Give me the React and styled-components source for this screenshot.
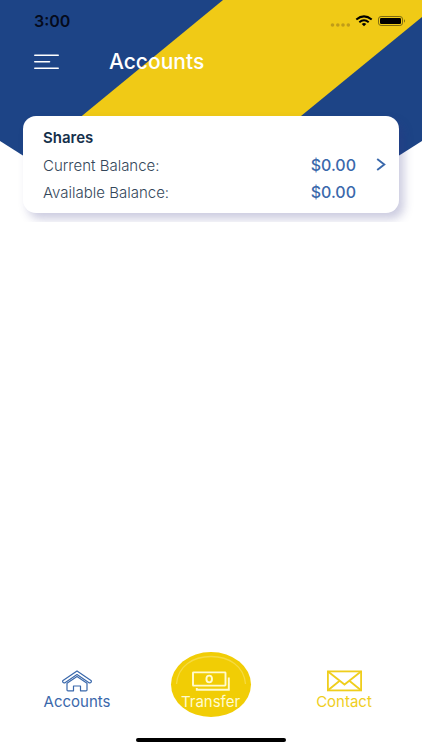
import React from 'react';
import styled, { createGlobalStyle } from 'styled-components';

const navy = '#1d4486';
const blue = '#3a68ab';
const yellow = '#f0ca16';
const tabYellow = '#f1cd05';
const contactYellow = '#efce1c';
const cream = '#fffbd0';
const ink = '#15304b';
const slate = '#34475a';
const white = '#ffffff';

const GlobalStyle = createGlobalStyle`
  * {
    box-sizing: border-box;
  }
  body {
    margin: 0;
    background: ${white};
    font-family: Inter, Roboto, sans-serif;
  }
`;

const Screen = styled.div`
  position: relative;
  display: flex;
  flex-direction: column;
  min-height: 100vh;
`;

const Backdrop = styled.svg`
  position: absolute;
  top: 0;
  left: 0;
  width: 100%;
  height: 210px;
  z-index: -1;
`;

const StatusBar = styled.div`
  display: flex;
  align-items: center;
  justify-content: space-between;
  height: 42px;
  padding: 0 16px 0 34px;
`;

const Time = styled.time`
  font-size: 16px;
  font-weight: 600;
  color: #050b1c;
`;

const Header = styled.header`
  display: flex;
  align-items: center;
  gap: 50px;
  height: 39px;
  padding: 0 34px;
`;

const MenuButton = styled.button`
  display: flex;
  padding: 0;
  border: 0;
  background: none;
  cursor: pointer;
`;

const Title = styled.h1`
  margin: 0;
  font-size: 21px;
  font-weight: 500;
  color: ${white};
`;

// clips the card shadow just below the card
const AccountList = styled.main`
  padding: 35px 23px 9px;
  overflow: hidden;
`;

const Card = styled.a`
  display: flex;
  align-items: center;
  gap: 20px;
  height: 97px;
  padding: 0 13px 0 20px;
  border-radius: 13px;
  background: ${white};
  box-shadow: 5px 6px 10px rgba(50, 50, 130, 0.25);
  text-decoration: none;
`;

const CardBody = styled.div`
  flex: 1;
`;

const CardTitle = styled.h2`
  margin: 0;
  font-size: 15px;
  font-weight: 600;
  line-height: 28px;
  color: ${ink};
`;

const BalanceRow = styled.div`
  display: flex;
  justify-content: space-between;
  line-height: 27px;
`;

const BalanceLabel = styled.span`
  font-size: 15px;
  font-weight: 300;
  color: ${slate};
`;

const Amount = styled.span`
  font-size: 16px;
  font-weight: 500;
  color: ${blue};
`;

const TabBar = styled.nav`
  display: flex;
  align-items: center;
  justify-content: space-between;
  margin-top: auto;
  padding: 0 38px 0 37px;
`;

const Tab = styled.a`
  display: flex;
  flex-direction: column;
  align-items: center;
  justify-content: flex-end;
  width: 80px;
  height: 65px;
  padding-bottom: 6px;
  font-size: 15px;
  line-height: 18px;
  color: ${(props) => props.$color};
  text-decoration: none;

  svg {
    margin-bottom: 1px;
  }
`;

const TransferTab = styled(Tab)`
  position: relative;
  border-radius: 50%;
  background: ${tabYellow};
`;

const Arc = styled.svg`
  position: absolute;
  top: 0;
  left: 0;
`;

const HomeIndicator = styled.div`
  width: 150px;
  height: 4px;
  margin: 21px auto 8px;
  border-radius: 2px;
  background: #000000;
`;

const StatusIcons = () => (
  <svg width="76" height="14" viewBox="0 0 76 14" aria-hidden="true">
    <g fill="#c09c18">
      <circle cx="2.5" cy="11" r="1.8" />
      <circle cx="7.8" cy="11" r="1.8" />
      <circle cx="13" cy="11" r="1.8" />
      <circle cx="18.3" cy="11" r="1.8" />
    </g>
    <g fill="none" stroke="#000000" strokeWidth="2">
      <path d="M26.3 5.6 Q34 -0.8 41.7 5.6" />
      <path d="M29.3 8.3 Q34 4.3 38.7 8.3" />
    </g>
    <path d="M31.7 9.9 Q34 8.2 36.3 9.9 L34 12.2 Z" />
    <rect x="48.5" y="2.5" width="24" height="9" rx="2.6" fill="none" stroke="#7a6812" />
    <rect x="50" y="4" width="21" height="6" rx="1.2" />
    <path d="M74 5.3 Q76 7 74 8.7 Z" fill="#7a6812" />
  </svg>
);

const MenuIcon = () => (
  <svg width="25" height="16" viewBox="0 0 25 16" fill="none" stroke={white} strokeWidth="1.6" strokeLinecap="round">
    <path d="M0.8 1.3 H24.2 M0.8 7.8 H15.5 M0.8 14.2 H24.2" />
  </svg>
);

const ChevronIcon = () => (
  <svg width="10" height="14" viewBox="0 0 10 14" fill="none" stroke={blue} strokeWidth="1.9">
    <path d="M1.2 1 L8.3 6.5 L1.2 12" />
  </svg>
);

const HomeIcon = () => (
  <svg width="30" height="22" viewBox="0 0 30 22" fill="none" stroke={blue} strokeWidth="1.2" strokeLinejoin="round">
    <path d="M15 0.9 L29 10.4 Q30 12 28.3 12.8 H27 L15 4.6 L3 12.8 H1.7 Q0 12 1 10.4 Z" />
    <path d="M5 13.2 V20 Q5 20.8 6 20.8 H11.5 V16 H18.5 V20.8 H24 Q25 20.8 25 20 V13.2 L15 6.6 Z" />
  </svg>
);

const CashIcon = () => (
  <svg width="38" height="21" viewBox="0 0 38 21" fill="none" stroke={cream} strokeWidth="1.9">
    <rect x="1" y="1.4" width="32.5" height="13.2" rx="0.5" />
    <ellipse cx="17.2" cy="8" rx="2.8" ry="3.4" />
    <path d="M36.8 6.5 V18.8 H4.8 V17" />
  </svg>
);

const MailIcon = () => (
  <svg width="35" height="22" viewBox="0 0 35 22" fill="none" stroke={contactYellow} strokeWidth="1.8">
    <rect x="0.9" y="1.4" width="33.2" height="19" />
    <path d="M1 1.5 L17.5 14.5 L34 1.5 M1 20.3 L12.7 10.8 M34 20.3 L22.3 10.8" />
  </svg>
);

const balances = [
  { label: 'Current Balance:', amount: '$0.00' },
  { label: 'Available Balance:', amount: '$0.00' },
];

const App = () => (
  <Screen>
    <GlobalStyle />
    <Backdrop viewBox="0 0 422 210" preserveAspectRatio="none" aria-hidden="true">
      <path d="M0 0 H422 V141 L392 160 H30 L0 141 Z" fill={navy} />
      <path d="M223 0 H422 V17 L301 116 L247 160 H29 L83 115 Z" fill={yellow} />
    </Backdrop>
    <StatusBar>
      <Time>3:00</Time>
      <StatusIcons />
    </StatusBar>
    <Header>
      <MenuButton type="button" aria-label="Menu">
        <MenuIcon />
      </MenuButton>
      <Title>Accounts</Title>
    </Header>
    <AccountList>
      <Card href="#shares">
        <CardBody>
          <CardTitle>Shares</CardTitle>
          {balances.map((b) => (
            <BalanceRow key={b.label}>
              <BalanceLabel>{b.label}</BalanceLabel>
              <Amount>{b.amount}</Amount>
            </BalanceRow>
          ))}
        </CardBody>
        <ChevronIcon />
      </Card>
    </AccountList>
    <TabBar>
      <Tab href="#accounts" $color={blue}>
        <HomeIcon />
        Accounts
      </Tab>
      <TransferTab href="#transfer" $color={cream}>
        <Arc width="80" height="65" viewBox="0 0 80 65" fill="none" stroke="#f5da42" strokeWidth="1.3">
          <path d="M5.5 32 C7 14 22 4.5 40 4.5 C58 4.5 73 14 74.5 32" />
        </Arc>
        <CashIcon />
        Transfer
      </TransferTab>
      <Tab href="#contact" $color={contactYellow}>
        <MailIcon />
        Contact
      </Tab>
    </TabBar>
    <HomeIndicator />
  </Screen>
);

export default App;
